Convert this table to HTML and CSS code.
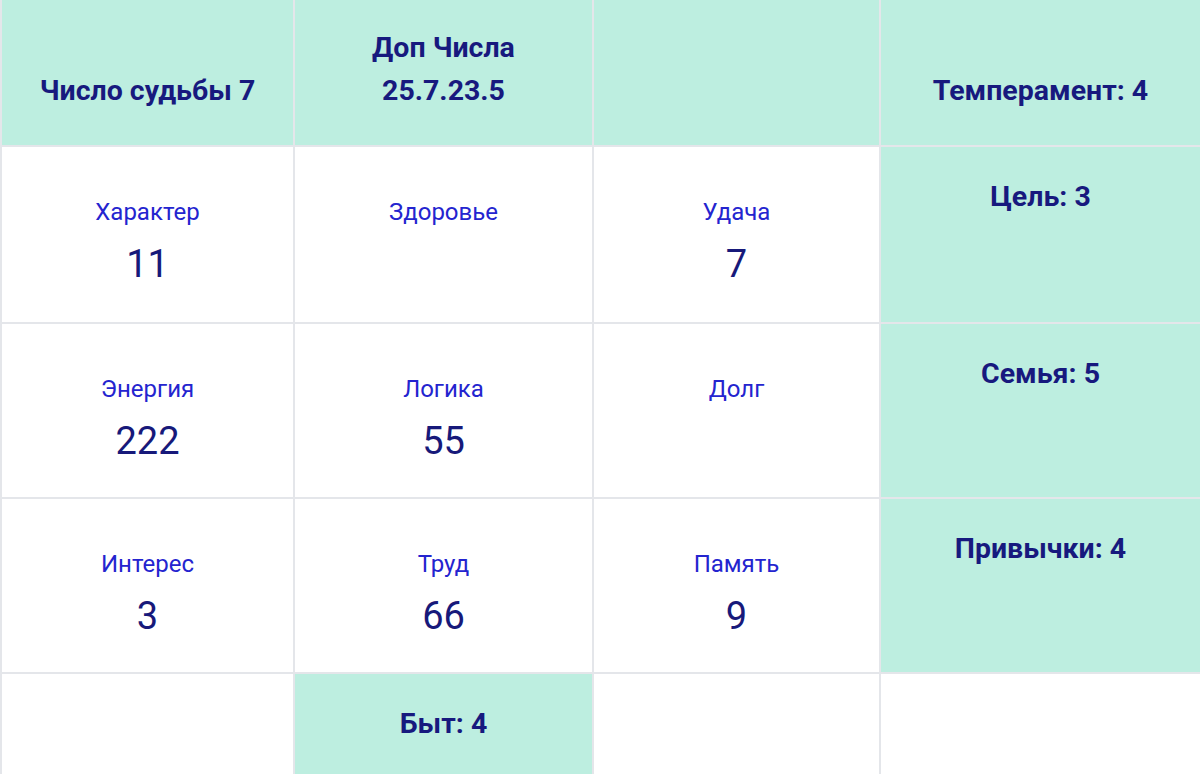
FILE: index.html
```html
<!DOCTYPE html>
<html lang="ru">
<head>
<meta charset="utf-8">
<title>Psychomatrix</title>
<link rel="stylesheet" href="styles.css">
</head>
<body>
<div class="matrix">
  <div class="cell head"><div class="title">Число судьбы 7</div></div>
  <div class="cell head"><div class="title">Доп Числа</div><div class="title">25.7.23.5</div></div>
  <div class="cell head"></div>
  <div class="cell head"><div class="title">Темперамент: 4</div></div>

  <div class="cell"><div class="label">Характер</div><div class="num">11</div></div>
  <div class="cell"><div class="label">Здоровье</div></div>
  <div class="cell"><div class="label">Удача</div><div class="num">7</div></div>
  <div class="cell side"><div class="title">Цель: 3</div></div>

  <div class="cell"><div class="label">Энергия</div><div class="num">222</div></div>
  <div class="cell"><div class="label">Логика</div><div class="num">55</div></div>
  <div class="cell"><div class="label">Долг</div></div>
  <div class="cell side"><div class="title">Семья: 5</div></div>

  <div class="cell"><div class="label">Интерес</div><div class="num">3</div></div>
  <div class="cell"><div class="label">Труд</div><div class="num">66</div></div>
  <div class="cell"><div class="label">Память</div><div class="num">9</div></div>
  <div class="cell side"><div class="title">Привычки: 4</div></div>

  <div class="cell"></div>
  <div class="cell side"><div class="title">Быт: 4</div></div>
  <div class="cell"></div>
  <div class="cell"></div>
</div>
</body>
</html>
```
FILE: styles.css
```css
html, body {
  margin: 0;
  padding: 0;
  background: #ffffff;
}
body {
  font-family: Roboto, "Liberation Sans", sans-serif;
  width: 1200px;
  height: 774px;
  overflow: hidden;
}
.matrix {
  display: grid;
  grid-template-columns: 291px 297px 285px 1fr;
  grid-template-rows: 145px 175px 173px 173px 120px;
  gap: 2px;
  padding-left: 2px;
  background: #e4e6ea;
}
.cell {
  background: #ffffff;
  display: flex;
  flex-direction: column;
  align-items: center;
  text-align: center;
  padding-top: 50px;
}
.head {
  background: #bdeee0;
  justify-content: flex-end;
  padding-top: 0;
  padding-bottom: 33px;
}
.side {
  background: #bdeee0;
  padding-top: 28px;
}
.title {
  font-weight: 700;
  font-size: 28.5px;
  line-height: 43px;
  color: #17197e;
}
.label {
  font-size: 24px;
  line-height: 30px;
  color: #2424cf;
}
.num {
  font-size: 38px;
  line-height: 44px;
  margin-top: 15px;
  color: #17197a;
}
```
